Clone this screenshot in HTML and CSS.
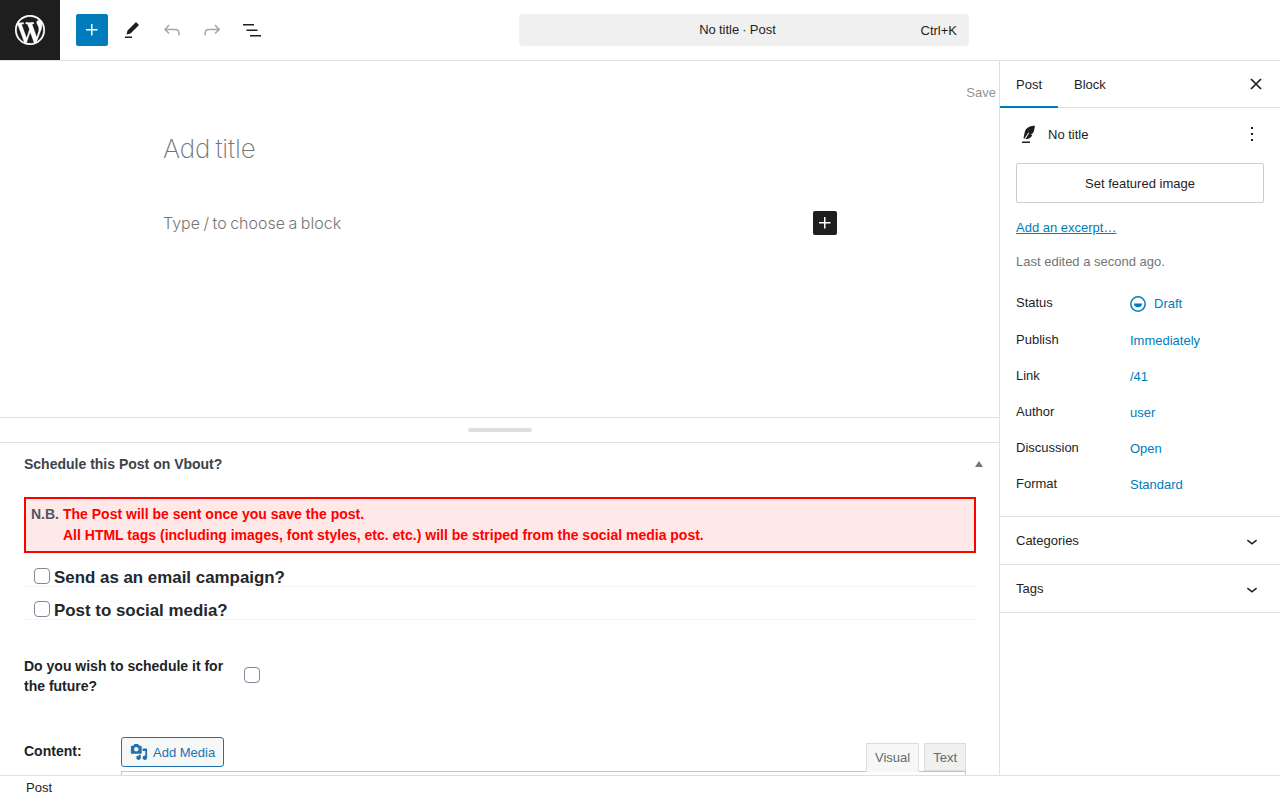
FILE: index.html
```html
<!DOCTYPE html>
<html lang="en">
<head>
    <meta charset="UTF-8">
    <title>Add New Post</title>
    <link rel="stylesheet" href="styles.css">
</head>
<body>
    <header class="topbar">
        <a class="wp-logo">
            <svg viewBox="0 0 20 20" width="30" height="30"><path fill="#fff" stroke="#fff" stroke-width="0.15" d="M20 10c0-5.51-4.49-10-10-10C4.48 0 0 4.49 0 10c0 5.52 4.48 10 10 10 5.51 0 10-4.48 10-10zM7.78 15.37L4.37 6.22c.55-.02 1.17-.08 1.17-.08.5-.06.44-1.13-.06-1.11 0 0-1.45.11-2.37.11-.18 0-.37 0-.58-.01C4.12 2.69 6.87 1.11 10 1.11c2.33 0 4.45.87 6.05 2.34-.68-.11-1.65.39-1.65 1.58 0 .74.45 1.36.9 2.1.35.61.55 1.36.55 2.46 0 1.49-1.4 5-1.4 5l-3.03-8.37c.54-.02.82-.17.82-.17.5-.05.44-1.25-.06-1.22 0 0-1.44.12-2.38.12-.87 0-2.33-.12-2.33-.12-.5-.03-.56 1.2-.06 1.22l.92.08 1.26 3.41zM17.41 10c.24-.64.74-1.87.43-4.25.7 1.29 1.05 2.71 1.05 4.25 0 3.29-1.73 6.24-4.4 7.78.97-2.59 1.94-5.2 2.92-7.78zM6.1 18.09C3.12 16.65 1.11 13.53 1.11 10c0-1.3.23-2.48.72-3.59C3.25 10.3 4.67 14.2 6.1 18.09zm4.03-6.63l2.58 6.98c-.86.29-1.76.45-2.71.45-.79 0-1.57-.11-2.29-.33.81-2.38 1.62-4.74 2.42-7.1z"/></svg>
        </a>
        <div class="tools">
            <button class="tool tool-add">
                <svg viewBox="0 0 24 24" width="24" height="24"><path fill="#fff" d="M11 12.5V17.5H12.5V12.5H17.5V11H12.5V6H11V11H6V12.5H11Z"/></svg>
            </button>
            <button class="tool">
                <svg viewBox="0 0 24 24" width="24" height="24"><path fill="#1e1e1e" d="m19 7-3-3-8.500 8.500-1 4 4-1L19 7Zm-7 11.500H5V20h7v-1.500Z"/></svg>
            </button>
            <button class="tool">
                <svg viewBox="0 0 24 24" width="24" height="24"><path fill="#a6a6a6" d="M18.300 11.700c-.6-.6-1.400-.9-2.300-.9H6.700l2.900-3.300-1.100-1-4.500 5L8.500 16l1-1-2.700-2.700H16c.5 0 .9.200 1.300.5 1 1 1 3.400 1 4.500v.3h1.500v-.2c0-1.500 0-4.300-1.500-5.700z"/></svg>
            </button>
            <button class="tool">
                <svg viewBox="0 0 24 24" width="24" height="24"><path fill="#a6a6a6" d="M15.600 6.500l-1.100 1 2.900 3.300H8c-.9 0-1.700.3-2.300.9-1.400 1.500-1.400 4.200-1.400 5.600v.2h1.500v-.3c0-1.100 0-3.500 1-4.500.3-.3.7-.5 1.300-.5h9.200L14.500 15l1.100 1.100 4.600-4.600-4.600-5z"/></svg>
            </button>
            <button class="tool">
                <svg viewBox="0 0 24 24" width="24" height="24"><path fill="#1e1e1e" d="M3 6h11v1.500H3V6Zm3.500 5.500h11V13h-11v-1.500ZM21 17H10v1.500h11V17Z"/></svg>
            </button>
        </div>
        <div class="command-wrap">
            <div class="command">
                <span class="command-title">No title · Post</span>
                <span class="command-key">Ctrl+K</span>
            </div>
        </div>
    </header>

    <div class="workspace">
        <main class="editor">
            <div class="canvas">
                <div class="save-row">Save</div>
                <div class="post-title">Add title</div>
                <div class="block-row">
                    <span class="block-hint">Type / to choose a block</span>
                    <button class="block-add">
                        <svg viewBox="0 0 24 24" width="24" height="24"><path fill="#fff" d="M11 12.500V17.500H12.500V12.500H17.500V11H12.500V6H11V11H6V12.500H11Z"/></svg>
                    </button>
                </div>
            </div>

            <div class="resize-bar"><span class="resize-handle"></span></div>

            <section class="metabox">
                <div class="metabox-head">
                    <h2>Schedule this Post on Vbout?</h2>
                    <span class="caret-up"></span>
                </div>
                <div class="notice">
                    <span class="notice-label">N.B.</span>
                    <span class="notice-text">The Post will be sent once you save the post.<br>All HTML tags (including images, font styles, etc. etc.) will be striped from the social media post.</span>
                </div>
                <div class="check-row first">
                    <span class="checkbox"></span><span class="check-text">Send as an email campaign?</span>
                </div>
                <div class="check-row">
                    <span class="checkbox"></span><span class="check-text">Post to social media?</span>
                </div>
                <div class="schedule-row">
                    <div class="schedule-label">Do you wish to schedule it for the future?</div>
                    <span class="checkbox"></span>
                </div>
                <div class="content-row">
                    <div class="content-label">Content:</div>
                    <div class="content-field">
                        <div class="media-bar">
                            <button class="add-media">
                                <svg viewBox="0 0 20 20" width="18" height="18"><path fill="#2271b1" d="M13 11V4c0-.55-.45-1-1-1h-1.670L9 1H5L3.670 3H2c-.55 0-1 .45-1 1v7c0 .55.45 1 1 1h10c.55 0 1-.45 1-1zM7 4.500c1.380 0 2.500 1.120 2.500 2.500S8.380 9.500 7 9.500 4.500 8.380 4.500 7 5.620 4.500 7 4.500zM14 6h5v10.500c0 1.380-1.120 2.500-2.500 2.500S14 17.880 14 16.500s1.120-2.500 2.500-2.500c.17 0 .34.020.5.050V9h-3V6zm-4 8.050V13h2v3.500c0 1.380-1.120 2.500-2.500 2.500S7 17.880 7 16.500 8.120 14 9.500 14c.17 0 .34.020.5.050z"/></svg>
                                Add Media
                            </button>
                            <div class="mode-tabs">
                                <span class="mode-tab active">Visual</span>
                                <span class="mode-tab">Text</span>
                            </div>
                        </div>
                        <div class="editor-box"></div>
                    </div>
                </div>
            </section>
        </main>

        <aside class="sidebar">
            <div class="side-tabs">
                <span class="side-tab active">Post</span>
                <span class="side-tab">Block</span>
                <svg class="side-close" viewBox="0 0 16 16" width="16" height="16"><path fill="none" stroke="#1e1e1e" stroke-width="1.700" d="M3 3l10 10M13 3L3 13"/></svg>
            </div>
            <div class="summary">
                <div class="post-card">
                    <svg viewBox="0 0 24 24" width="24" height="24"><path fill="#1e1e1e" d="M19 3.500c-4 .3-8 1.700-9.500 4.500-1 2-1.500 5.500-2 8.500l.9.300 4-6.300.7.500-3.800 6.200c2.800 0 5-1 6.200-2.600 1-1.300.6-2.200-.3-2.200h-1c1.500 0 2.700-1 3.300-2.300.6-1.300 1-3.700 1.500-6.600zM6 19.500h8V21H6z"/></svg>
                    <span class="post-card-title">No title</span>
                    <svg class="post-card-more" viewBox="0 0 24 24" width="24" height="24"><path fill="#1e1e1e" d="M13 19h-2v-2h2v2zm0-6h-2v-2h2v2zm0-6h-2V5h2v2z"/></svg>
                </div>
                <button class="featured">Set featured image</button>
                <a class="excerpt">Add an excerpt…</a>
                <p class="edited">Last edited a second ago.</p>
                <dl class="props">
                    <div class="prop status">
                        <dt>Status</dt>
                        <dd>
                            <svg viewBox="0 0 16 16" width="16" height="16"><circle cx="8" cy="8" r="7.200" fill="none" stroke="#007cba" stroke-width="1.500"/><path fill="#007cba" d="M4 7.500h8a4 3.800 0 0 1-8 0z"/></svg>
                            Draft
                        </dd>
                    </div>
                    <div class="prop"><dt>Publish</dt><dd>Immediately</dd></div>
                    <div class="prop"><dt>Link</dt><dd>/41</dd></div>
                    <div class="prop"><dt>Author</dt><dd>user</dd></div>
                    <div class="prop"><dt>Discussion</dt><dd>Open</dd></div>
                    <div class="prop"><dt>Format</dt><dd>Standard</dd></div>
                </dl>
            </div>
            <div class="panel">
                <span>Categories</span>
                <svg viewBox="0 0 24 24" width="22" height="22"><path fill="#1e1e1e" d="M17.500 11.600L12 16l-5.500-4.400.9-1.200L12 14l4.500-3.600 1 1.200z"/></svg>
            </div>
            <div class="panel">
                <span>Tags</span>
                <svg viewBox="0 0 24 24" width="22" height="22"><path fill="#1e1e1e" d="M17.500 11.600L12 16l-5.500-4.400.9-1.200L12 14l4.500-3.600 1 1.200z"/></svg>
            </div>
        </aside>
    </div>

    <footer class="statusbar">Post</footer>
</body>
</html>
```

FILE: styles.css
```css
* {
    box-sizing: border-box;
}

html, body {
    height: 100%;
}

body {
    margin: 0;
    height: 800px;
    overflow: hidden;
    display: flex;
    flex-direction: column;
    font-family: "Liberation Sans", Arial, sans-serif;
    font-size: 13px;
    color: #1e1e1e;
    background: white;
}

button {
    font-family: inherit;
    padding: 0;
    border: none;
    background: none;
}

svg {
    display: block;
    flex-shrink: 0;
}

/* top toolbar */
.topbar {
    height: 61px;
    flex-shrink: 0;
    display: flex;
    align-items: center;
    border-bottom: 1px solid #e0e0e0;
    position: relative;
}

.wp-logo {
    width: 60px;
    height: 60px;
    background: #1e1e1e;
    display: flex;
    align-items: center;
    justify-content: center;
}

.tools {
    display: flex;
    gap: 8px;
    margin-left: 16px;
}

.tool {
    width: 32px;
    height: 32px;
    display: flex;
    align-items: center;
    justify-content: center;
    border-radius: 2px;
}

.tool-add {
    background: #007cba;
}

.command-wrap {
    position: absolute;
    top: 14px;
    left: 519px;
    width: 450px;
}

.command {
    height: 32px;
    background: #f0f0f0;
    border-radius: 4px;
    display: flex;
    align-items: center;
    justify-content: center;
    position: relative;
}

.command-title {
    margin-left: -13px;
    margin-top: -1px;
    word-spacing: -0.5px;
}

.command-key {
    position: absolute;
    right: 12px;
    top: 9px;
}

/* main area */
.workspace {
    flex: 1;
    min-height: 0;
    display: flex;
}

.editor {
    width: 1000px;
    border-right: 1px solid #e0e0e0;
    overflow: hidden;
}

.canvas {
    height: 356px;
    position: relative;
}

.save-row {
    padding: 24px 3px 0 0;
    text-align: right;
    color: #949494;
}

.post-title {
    margin: 31px 0 0 163px;
    font-family: Inter, sans-serif;
    font-size: 26px;
    font-weight: 200;
    line-height: 36px;
    letter-spacing: -0.1px;
    word-spacing: -2px;
    color: #757575;
}

.block-row {
    display: flex;
    align-items: center;
    justify-content: space-between;
    width: 674px;
    margin: 44px 0 0 163px;
}

.block-hint {
    font-family: Inter, sans-serif;
    font-size: 16px;
    font-weight: 300;
    color: #757575;
    letter-spacing: 0;
    word-spacing: -1px;
}

.block-add {
    width: 24px;
    height: 24px;
    background: #1e1e1e;
    border-radius: 2px;
}

.resize-bar {
    height: 26px;
    border-top: 1px solid #e0e0e0;
    border-bottom: 1px solid #e0e0e0;
    display: flex;
    align-items: center;
    justify-content: center;
}

.resize-handle {
    width: 64px;
    height: 4px;
    border-radius: 2px;
    background: #ddd;
}

/* vbout metabox */
.metabox {
    padding: 0 23px 0 24px;
}

.metabox-head {
    height: 42px;
    display: flex;
    align-items: center;
    justify-content: space-between;
}

.metabox-head h2 {
    margin: 0;
    font-size: 14px;
    font-weight: 700;
    color: #3c434a;
}

.caret-up {
    width: 0;
    height: 0;
    margin-right: -7px;
    border-left: 4px solid transparent;
    border-right: 4px solid transparent;
    border-bottom: 6px solid #72777c;
}

.notice {
    margin-top: 12px;
    width: 952px;
    height: 56px;
    padding: 5px 5px;
    display: flex;
    gap: 4px;
    border: 2px solid #f00;
    background: #ffe8e8;
    font-size: 14px;
    font-weight: 700;
    line-height: 21px;
}

.notice-label {
    color: #50575e;
}

.notice-text {
    color: #f00;
}

.check-row {
    width: 952px;
    height: 33px;
    padding: 0 0 1px 10px;
    display: flex;
    align-items: flex-end;
    gap: 4px;
    border-bottom: 1px solid #f4f4f4;
    font-size: 16.9px;
    font-weight: 700;
    line-height: 19px;
    color: #23282d;
}

.check-row.first {
    height: 34px;
}

.check-row .checkbox {
    margin-bottom: 1px;
}

.check-text {
    margin-bottom: -2px;
}

.checkbox {
    width: 16px;
    height: 16px;
    border: 1px solid #7e8993;
    border-radius: 4px;
    background: white;
    flex-shrink: 0;
}

.schedule-row {
    display: flex;
    align-items: center;
    margin-top: 36px;
    gap: 20px;
}

.schedule-row .checkbox {
    margin-top: -2px;
}

.schedule-label {
    width: 200px;
    font-size: 14px;
    font-weight: 700;
    line-height: 20px;
    color: #1d2327;
}

.content-row {
    display: flex;
    margin-top: 41px;
}

.content-label {
    width: 97px;
    padding-top: 6px;
    font-size: 14px;
    font-weight: 700;
    color: #1d2327;
}

.content-field {
    width: 845px;
}

.media-bar {
    height: 34px;
    display: flex;
    justify-content: space-between;
    align-items: flex-end;
}

.add-media {
    height: 30px;
    width: 103px;
    align-self: flex-start;
    display: flex;
    align-items: center;
    gap: 5px;
    padding-left: 8px;
    font-size: 13px;
    color: #2271b1;
    background: #f6f7f7;
    border: 1px solid #2271b1;
    border-radius: 3px;
}

.mode-tabs {
    display: flex;
    align-items: flex-start;
    gap: 5px;
    margin-bottom: -1px;
    position: relative;
}

.mode-tab {
    height: 28px;
    padding: 0 8px;
    display: flex;
    align-items: center;
    color: #646970;
    background: #f0f0f1;
    border: 1px solid #dcdcde;
}

.mode-tab.active {
    height: 29px;
    background: #f6f7f7;
    border-bottom-color: #f6f7f7;
}

.editor-box {
    height: 40px;
    border: 1px solid #c3c4c7;
    background: white;
}

/* settings sidebar */
.sidebar {
    width: 280px;
    flex-shrink: 0;
}

.side-tabs {
    height: 47px;
    display: flex;
    align-items: stretch;
    border-bottom: 1px solid #e0e0e0;
    position: relative;
}

.side-tab {
    padding: 0 16px;
    display: flex;
    align-items: center;
}

.side-tab.active {
    box-shadow: inset 0 -2px 0 #007cba;
    margin-bottom: -1px;
    padding-bottom: 1px;
}

.side-close {
    position: absolute;
    top: 15px;
    right: 16px;
}

.summary {
    height: 409px;
    padding: 14px 16px 0;
    border-bottom: 1px solid #e0e0e0;
}

.post-card {
    height: 24px;
    display: flex;
    align-items: center;
    gap: 8px;
}

.post-card-title {
    flex: 1;
}

.featured {
    display: block;
    width: 100%;
    height: 40px;
    margin-top: 17px;
    font-size: 13px;
    color: #1e1e1e;
    border: 1px solid #ccc;
    border-radius: 2px;
    background: white;
}

.excerpt {
    display: block;
    margin-top: 17px;
    color: #007cba;
    text-decoration: underline;
    line-height: 15px;
}

.edited {
    margin: 19px 0 0;
    color: #757575;
    line-height: 15px;
}

.props {
    margin: 16px 0 0;
}

.prop {
    display: flex;
    height: 36px;
    align-items: center;
}

.prop.status {
    height: 37px;
}

.prop dt {
    width: 114px;
    margin-top: -2px;
}

.prop dd {
    margin: 0;
    display: flex;
    align-items: center;
    gap: 8px;
    color: #007cba;
}

.panel {
    height: 48px;
    padding: 0 17px 0 16px;
    display: flex;
    align-items: center;
    justify-content: space-between;
    border-bottom: 1px solid #e0e0e0;
}

/* footer */
.statusbar {
    height: 25px;
    flex-shrink: 0;
    padding: 4px 0 0 26px;
    line-height: 15px;
    border-top: 1px solid #e0e0e0;
    background: white;
    position: relative;
}
```
